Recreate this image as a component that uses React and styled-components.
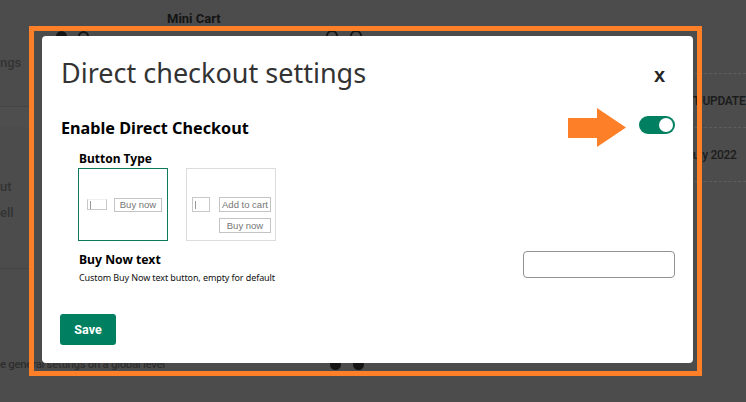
import React from "react";
import styled, { createGlobalStyle } from "styled-components";

const Global = createGlobalStyle`
  html, body { margin: 0; padding: 0; }
  body {
    width: 746px; height: 402px; overflow: hidden;
    background: #4c4c4c;
    font-family: "Noto Sans", "Open Sans", sans-serif;
  }
  #root { width: 746px; height: 402px; }
`;

const Page = styled.div`
  position: relative;
  width: 746px;
  height: 402px;
  overflow: hidden;
  background: #4c4c4c;
`;

/* ---------- dimmed background page ---------- */
const Backdrop = styled.div`
  display: grid;
  grid-template-columns: 30px 1fr 56px;
  height: 100%;
`;

const SideCol = styled.div`
  display: flex;
  flex-direction: column;
  overflow: hidden;
`;

const SideItem = styled.div`
  display: flex;
  align-items: center;
  white-space: nowrap;
  flex: 0 0 ${(p) => p.$h}px;
  box-sizing: border-box;
  font-family: "Roboto", "Liberation Sans", sans-serif;
  font-size: 13px;
  font-weight: 500;
  color: #333333;
  border-bottom: ${(p) => (p.$line ? "1px solid #444444" : "none")};
  background: ${(p) => p.$bg || "transparent"};
`;

const MainCol = styled.div`
  display: flex;
  flex-direction: column;
  padding-left: 137px;
`;

const MainTitle = styled.div`
  height: 30px;
  padding-top: 11px;
  box-sizing: border-box;
  font-family: "Roboto", "Liberation Sans", sans-serif;
  font-weight: 700;
  font-size: 13px;
  color: #141414;
`;

const DotLine = styled.div`
  display: flex;
  align-items: center;
  margin-left: ${(p) => p.$ml}px;
`;

const DotRow = styled.div`
  display: flex;
  gap: ${(p) => p.$gap || 10}px;
  margin-left: ${(p) => p.$ml || 0}px;
`;

const Dot = styled.span`
  width: ${(p) => p.$s || 11}px;
  height: ${(p) => p.$s || 11}px;
  border-radius: 50%;
  box-sizing: border-box;
  border: 2px solid #151515;
  background: ${(p) => (p.$filled ? "#151515" : "transparent")};
`;

const Spacer = styled.div`
  flex: 1;
`;

const BottomRow = styled.div`
  display: flex;
  align-items: center;
  height: 16px;
  margin-bottom: 30px;
  margin-left: -167px;
`;

const BottomText = styled.span`
  font-family: "Roboto", "Liberation Sans", sans-serif;
  font-size: 11.5px;
  font-weight: 500;
  letter-spacing: -0.35px;
  color: #2e2e2e;
  white-space: nowrap;
  width: 328px;
`;

const RightCol = styled.div`
  display: flex;
  flex-direction: column;
  padding-top: 73px;
  overflow: hidden;
`;

const RightCell = styled.div`
  height: 54px;
  box-sizing: border-box;
  display: flex;
  align-items: center;
  border-top: 1px dashed #5e5e5e;
  font-family: "Roboto", "Liberation Sans", sans-serif;
  font-size: 12px;
  font-weight: ${(p) => (p.$bold ? 600 : 500)};
  letter-spacing: -0.3px;
  color: #1c1c1c;
  white-space: nowrap;
  padding-left: 3px;
`;

/* ---------- annotation frame + modal ---------- */
const Frame = styled.div`
  position: absolute;
  left: 29px;
  top: 26px;
  width: 673px;
  height: 350px;
  box-sizing: border-box;
  border: 5px solid #fd7f28;
  pointer-events: none;
`;

const Modal = styled.div`
  position: absolute;
  left: 42px;
  top: 36px;
  width: 651px;
  height: 327px;
  box-sizing: border-box;
  background: #ffffff;
  border-radius: 4px;
  padding: 14px 18px 0 19px;
  display: flex;
  flex-direction: column;
  color: #000;
`;

const Header = styled.div`
  display: flex;
  align-items: center;
  justify-content: space-between;
  height: 44px;
`;

const Title = styled.h1`
  margin: 0;
  font-size: 27px;
  font-weight: 400;
  color: #333;
`;

const Close = styled.button`
  border: 0;
  background: none;
  padding: 0;
  margin-right: 10px;
  margin-top: 7px;
  font-family: "Liberation Sans", Arial, sans-serif;
  font-weight: 700;
  font-size: 20px;
  color: #262626;
  cursor: pointer;
`;

const EnableRow = styled.div`
  display: flex;
  align-items: center;
  justify-content: space-between;
  margin-top: 22px;
  height: 24px;
`;

const EnableLabel = styled.h2`
  margin: 0;
  font-size: 16.2px;
  font-weight: 700;
`;

const ToggleWrap = styled.div`
  position: relative;
  display: flex;
  align-items: center;
  margin-top: -6px;
`;

const Arrow = styled.svg`
  position: absolute;
  right: 49px;
  top: -8px;
`;

const Toggle = styled.span`
  display: flex;
  align-items: center;
  justify-content: flex-end;
  width: 36px;
  height: 18px;
  box-sizing: border-box;
  padding: 2px;
  border-radius: 9px;
  background: #008060;
`;

const Knob = styled.span`
  width: 14px;
  height: 14px;
  border-radius: 50%;
  background: #fff;
`;

const Section = styled.div`
  padding-left: 18px;
  display: flex;
  flex-direction: column;
`;

const Label = styled.div`
  font-size: ${(p) => p.$fs || 12}px;
  font-weight: 700;
  margin-top: ${(p) => p.$mt || 0}px;
  line-height: 17px;
`;

const Options = styled.div`
  display: flex;
  gap: 18px;
  margin-top: 1px;
  margin-left: -1px;
`;

const Option = styled.div`
  width: 90px;
  height: 73px;
  box-sizing: border-box;
  border: 1px solid ${(p) => (p.$active ? "#0e7a5c" : "#dcdcdc")};
  display: grid;
  grid-template-columns: ${(p) => p.$cols};
  column-gap: ${(p) => p.$gap}px;
  row-gap: 6px;
  align-content: ${(p) => (p.$top ? "start" : "center")};
  align-items: center;
  padding: ${(p) => p.$pad};
`;

const QtyBox = styled.span`
  display: flex;
  align-items: center;
  height: ${(p) => p.$h}px;
  box-sizing: border-box;
  border: 1px solid #c8c8c8;
  border-top-color: ${(p) => (p.$open ? "#eeeeee" : "#c8c8c8")};
  padding-left: 2px;
  &::before {
    content: "";
    width: 1px;
    height: 8px;
    background: #999;
  }
`;

const Fake = styled.span`
  display: flex;
  align-items: center;
  justify-content: center;
  height: ${(p) => p.$h}px;
  box-sizing: border-box;
  border: 1px solid #c4c4c4;
  font-family: "Liberation Sans", Arial, sans-serif;
  font-size: 9.5px;
  color: #767676;
  grid-column: ${(p) => p.$col || "auto"};
`;

const TextRow = styled.div`
  display: flex;
  justify-content: space-between;
  align-items: flex-start;
  margin-top: 10px;
`;

const TextInfo = styled.div`
  display: flex;
  flex-direction: column;
`;

const Help = styled.div`
  font-size: 9px;
  letter-spacing: -0.1px;
  margin-top: 3px;
  color: #111;
`;

const TextInput = styled.input`
  width: 152px;
  height: 27px;
  box-sizing: border-box;
  border: 1px solid #929292;
  border-radius: 4px;
  margin-top: 0;
  outline: none;
`;

const SaveButton = styled.button`
  align-self: flex-start;
  margin-top: 30px;
  margin-left: -1px;
  width: 56px;
  height: 31px;
  border: 0;
  border-radius: 3px;
  background: #008060;
  color: #fff;
  font-family: "Roboto", "Liberation Sans", sans-serif;
  font-weight: 700;
  font-size: 12.5px;
  cursor: pointer;
`;

export default function App() {
  return (
    <Page>
      <Global />
      <Backdrop>
        <SideCol>
          <SideItem $h={44} />
          <SideItem $h={36}>ngs</SideItem>
          <SideItem $h={27} $line />
          <SideItem $h={20} $bg="#4e4e4e" />
          <SideItem $h={46} />
          <SideItem $h={26}>ut</SideItem>
          <SideItem $h={26}>ell</SideItem>
          <SideItem $h={44} $line />
        </SideCol>
        <MainCol>
          <MainTitle>Mini Cart</MainTitle>
          <DotLine $ml={-111}>
            <DotRow $gap={11}>
              <Dot $filled />
              <Dot />
            </DotRow>
            <DotRow $ml={237} $gap={12}>
              <Dot $s={12} />
              <Dot $s={12} />
            </DotRow>
          </DotLine>
          <Spacer />
          <BottomRow>
            <BottomText>e general settings on a global level</BottomText>
            <DotRow $ml={2} $gap={12}>
              <Dot $filled />
              <Dot $filled />
            </DotRow>
          </BottomRow>
        </MainCol>
        <RightCol>
          <RightCell $bold>T UPDATE</RightCell>
          <RightCell>uly 2022</RightCell>
          <RightCell />
        </RightCol>
      </Backdrop>

      <Frame />
      <Modal role="dialog" aria-label="Direct checkout settings">
        <Header>
          <Title>Direct checkout settings</Title>
          <Close aria-label="Close">x</Close>
        </Header>
        <EnableRow>
          <EnableLabel>Enable Direct Checkout</EnableLabel>
          <ToggleWrap>
            <Arrow width="58" height="39" viewBox="0 0 58 39">
              <polygon points="0,10 29,10 29,0 58,19.5 29,39 29,30 0,30" fill="#fd7f28" />
            </Arrow>
            <Toggle>
              <Knob />
            </Toggle>
          </ToggleWrap>
        </EnableRow>
        <Section>
          <Label $mt={10}>Button Type</Label>
          <Options>
            <Option $active $cols="20px 48px" $gap={7} $pad="0 0 0 8px">
              <QtyBox $h={11} $open />
              <Fake $h={14}>Buy now</Fake>
            </Option>
            <Option $top $cols="18px 52px" $gap={9} $pad="28px 0 0 5px">
              <QtyBox $h={15} />
              <Fake $h={15}>Add to cart</Fake>
              <Fake $h={15} $col="2">Buy now</Fake>
            </Option>
          </Options>
          <TextRow>
            <TextInfo>
              <Label $fs={12.2}>Buy Now text</Label>
              <Help>Custom Buy Now text button, empty for default</Help>
            </TextInfo>
            <TextInput type="text" aria-label="Buy Now text" />
          </TextRow>
        </Section>
        <SaveButton>Save</SaveButton>
      </Modal>
    </Page>
  );
}
